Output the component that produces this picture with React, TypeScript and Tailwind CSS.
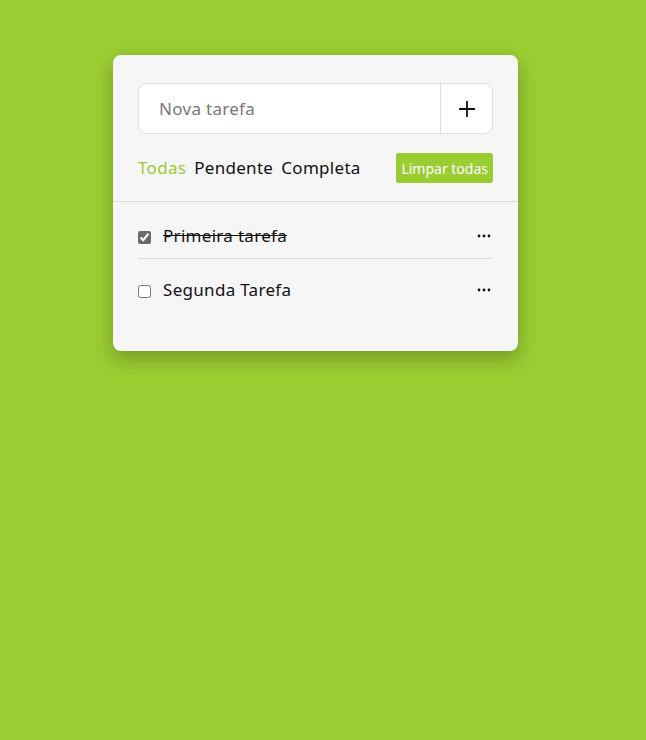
import React from "react";

export default function App() {
  const font = { fontFamily: '"Noto Sans", "Open Sans", sans-serif' };
  return (
    <div className="min-h-[740px] w-full bg-[#9acd32]" style={font}>
      <div className="pt-[55px] pl-[113px]">
        <div className="w-[405px] bg-[#f6f6f6] rounded-[8px] shadow-[0_8px_20px_rgba(0,0,0,0.25)]">
          <div className="px-[25px] pt-[28px] pb-[18px] border-b border-[#dcdcdc]">
            <div className="flex h-[51px] bg-white border border-[#dedede] rounded-[8px] overflow-hidden">
              <input
                className="flex-1 min-w-0 pl-[20px] text-[17px] tracking-[0.3px] text-[#333] placeholder:text-[#777] outline-none bg-transparent"
                placeholder="Nova tarefa"
                style={font}
              />
              <button className="w-[52px] border-l border-[#dedede] flex items-center justify-center">
                <svg width="18" height="18" viewBox="0 0 18 18">
                  <path d="M9 1v16M1 9h16" stroke="#111" strokeWidth="1.8" />
                </svg>
              </button>
            </div>
            <div className="mt-[19px] flex items-center h-[30px]">
              <div className="flex gap-[8px] text-[17px] tracking-[0.3px] text-[#111]">
                <span className="text-[#9acd32]">Todas</span>
                <span>Pendente</span>
                <span>Completa</span>
              </div>
              <button className="ml-auto h-[30px] px-[5px] rounded-[3px] bg-[#9acd32] text-white text-[14px]">
                Limpar todas
              </button>
            </div>
          </div>
          <div className="px-[25px] pb-[38px]">
            <div className="flex items-center pt-[22px] pb-[10px] border-b border-[#dcdcdc]">
              <input type="checkbox" defaultChecked className="w-[13px] h-[13px] mt-[3px] accent-[#6b6b6b]" />
              <span className="ml-[12px] text-[17px] tracking-[0.3px] leading-[24px] text-[#111] line-through">Primeira tarefa</span>
              <svg className="ml-auto mr-[2px]" width="14" height="4" viewBox="0 0 14 4">
                <circle cx="2" cy="2" r="1.4" fill="#111" />
                <circle cx="7" cy="2" r="1.4" fill="#111" />
                <circle cx="12" cy="2" r="1.4" fill="#111" />
              </svg>
            </div>
            <div className="flex items-center pt-[19px] pb-[11px]">
              <input type="checkbox" className="w-[13px] h-[13px] mt-[3px]" />
              <span className="ml-[12px] text-[17px] tracking-[0.3px] leading-[24px] text-[#111]">Segunda Tarefa</span>
              <svg className="ml-auto mr-[2px]" width="14" height="4" viewBox="0 0 14 4">
                <circle cx="2" cy="2" r="1.4" fill="#111" />
                <circle cx="7" cy="2" r="1.4" fill="#111" />
                <circle cx="12" cy="2" r="1.4" fill="#111" />
              </svg>
            </div>
          </div>
        </div>
      </div>
    </div>
  );
}
